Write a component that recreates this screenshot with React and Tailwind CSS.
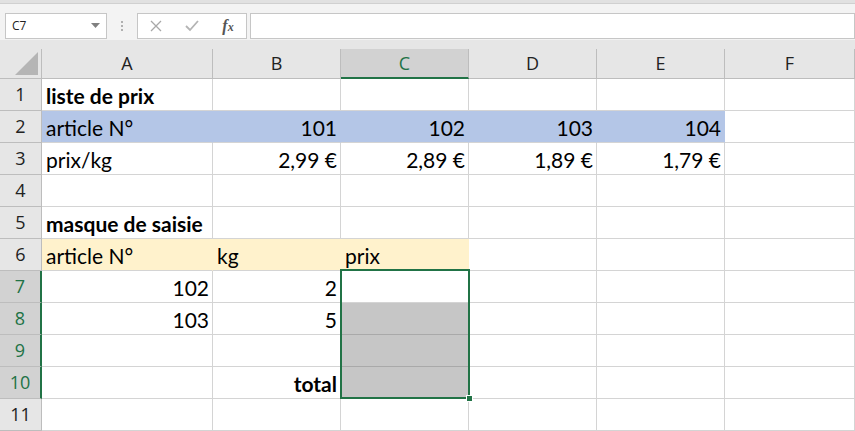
import React from 'react';

const COLS = ['A', 'B', 'C', 'D', 'E', 'F'];
const WIDTHS = ['w-[171px]', 'w-[128px]', 'w-[128px]', 'w-[128px]', 'w-[128px]', 'w-[130px]'];

// fill per row/col, text + alignment
const rows = [
  { n: 1, cells: [{ t: 'liste de prix', b: true }] },
  { n: 2, fill: 'blue', fillCols: 5, cells: [{ t: 'article N°' }, { t: '101', r: true }, { t: '102', r: true }, { t: '103', r: true }, { t: '104', r: true }] },
  { n: 3, cells: [{ t: 'prix/kg' }, { t: '2,99 €', r: true }, { t: '2,89 €', r: true }, { t: '1,89 €', r: true }, { t: '1,79 €', r: true }] },
  { n: 4, cells: [] },
  { n: 5, cells: [{ t: 'masque de saisie', b: true }] },
  { n: 6, fill: 'yellow', fillCols: 3, cells: [{ t: 'article N°' }, { t: 'kg' }, { t: 'prix' }] },
  { n: 7, sel: true, cells: [{ t: '102', r: true }, { t: '2', r: true }, {}] },
  { n: 8, sel: true, gray: true, cells: [{ t: '103', r: true }, { t: '5', r: true }] },
  { n: 9, sel: true, gray: true, cells: [] },
  { n: 10, sel: true, gray: true, cells: [{}, { t: 'total', r: true, b: true }] },
  { n: 11, cells: [] },
];

const cellFont = { fontFamily: 'Lato, "Open Sans", sans-serif' };

function Cell({ width, cell, fill, gray, colIndex }) {
  let bg = 'bg-white border-[#d4d4d4]';
  if (fill === 'blue') bg = 'bg-[#b4c6e7] border-r-[#b4c6e7] border-b-[#d4d4d4]';
  if (fill === 'yellow') bg = 'bg-[#fff2cc] border-r-[#fff2cc] border-b-[#d4d4d4]';
  if (gray && colIndex === 2) bg = 'bg-[#c6c6c6] border-r-[#d4d4d4] border-b-[#a9a9a9]';
  return (
    <div
      className={`${width} h-[32px] shrink-0 border-r border-b ${bg} flex items-end pl-[4px] pr-[3px] pb-[3px] text-[21px] leading-[22px] text-black ${cell?.r ? 'justify-end' : 'justify-start'} ${cell?.b ? 'font-bold' : ''}`}
      style={cellFont}
    >
      {cell?.t}
    </div>
  );
}

export default function App() {
  return (
    <div className="w-[855px] h-[431px] overflow-hidden bg-white relative" style={{ fontFamily: '"Open Sans", "Noto Sans", sans-serif' }}>
      {/* formula bar */}
      <div className="h-[4px] bg-[#e1e1e1] border-b border-[#d0d0d0]" />
      <div className="h-[36px] bg-[#f3f3f3] flex items-start pt-[9px] pl-[5px]">
        <div className="w-[102px] h-[26px] bg-white border border-[#c6c6c6] flex items-center justify-between pl-[6px] pr-[6px]">
          <span className="text-[12px] text-[#222]">C7</span>
          <svg width="9" height="6" viewBox="0 0 9 6"><path d="M0 0 L9 0 L4.5 5 Z" fill="#808080" /></svg>
        </div>
        <div className="w-[30px] h-[26px] flex flex-col items-center justify-center gap-[2px]">
          <span className="w-[2px] h-[2px] bg-[#b0b0b0]" />
          <span className="w-[2px] h-[2px] bg-[#b0b0b0]" />
          <span className="w-[2px] h-[2px] bg-[#b0b0b0]" />
        </div>
        <div className="w-[110px] h-[26px] bg-white border border-[#c6c6c6] flex items-center">
          <div className="w-[36px] flex justify-center">
            <svg width="12" height="12" viewBox="0 0 12 12"><path d="M1 1 L11 11 M11 1 L1 11" stroke="#a8a8a8" strokeWidth="1.3" /></svg>
          </div>
          <div className="w-[36px] flex justify-center">
            <svg width="14" height="12" viewBox="0 0 14 12"><path d="M1 6 L5 10 L13 1" stroke="#b4b4b4" strokeWidth="1.8" fill="none" /></svg>
          </div>
          <div className="w-[36px] flex justify-center">
            <span className="italic font-bold text-[16px] leading-none text-[#555]" style={{ fontFamily: '"Liberation Serif", serif' }}>f<span className="text-[12px]">x</span></span>
          </div>
        </div>
        <div className="ml-[3px] flex-1 h-[26px] bg-white border border-[#c6c6c6]" />
      </div>

      {/* sheet */}
      <div className="relative bg-[#e6e6e6] pt-[9px]">
        {/* column headers */}
        <div className="flex h-[30px]">
          <div className="w-[42px] h-[30px] shrink-0 border-r border-b border-[#bdbdbd] flex items-end justify-end pr-[3px] pb-[3px]">
            <svg width="23" height="23" viewBox="0 0 23 23"><path d="M23 0 L23 23 L0 23 Z" fill="#b5b5b5" /></svg>
          </div>
          {COLS.map((c, i) =>
            c === 'C' ? (
              <div key={c} className={`${WIDTHS[i]} h-[30px] shrink-0 bg-[#d2d2d2] border-r border-[#bdbdbd] border-b-2 border-b-[#217346] flex items-center justify-center text-[18px] text-[#217346]`}>
                {c}
              </div>
            ) : (
              <div key={c} className={`${WIDTHS[i]} h-[30px] shrink-0 border-r border-b border-[#bdbdbd] flex items-center justify-center text-[18px] text-[#222]`}>
                {c}
              </div>
            )
          )}
        </div>

        {/* rows */}
        {rows.map((row) => (
          <div key={row.n} className="flex h-[32px]">
            {row.sel ? (
              <div className="w-[42px] h-[32px] shrink-0 bg-[#d2d2d2] border-r-2 border-r-[#217346] border-b border-b-[#bdbdbd] flex items-center justify-center text-[18px] text-[#217346]">
                {row.n}
              </div>
            ) : (
              <div className="w-[42px] h-[32px] shrink-0 border-r border-b border-[#bdbdbd] flex items-center justify-center text-[18px] text-[#222]">
                {row.n}
              </div>
            )}
            {COLS.map((c, i) => (
              <Cell
                key={c}
                width={WIDTHS[i]}
                cell={row.cells[i]}
                fill={row.fill && i < row.fillCols ? row.fill : null}
                gray={row.gray}
                colIndex={i}
              />
            ))}
          </div>
        ))}

        {/* selection C7:C10 */}
        <div className="absolute left-[340px] top-[229px] w-[130px] h-[130px] border-2 border-[#217346] pointer-events-none">
          <div className="absolute right-[-5px] bottom-[-5px] w-[7px] h-[7px] bg-[#217346] border border-white" />
        </div>
      </div>
    </div>
  );
}
